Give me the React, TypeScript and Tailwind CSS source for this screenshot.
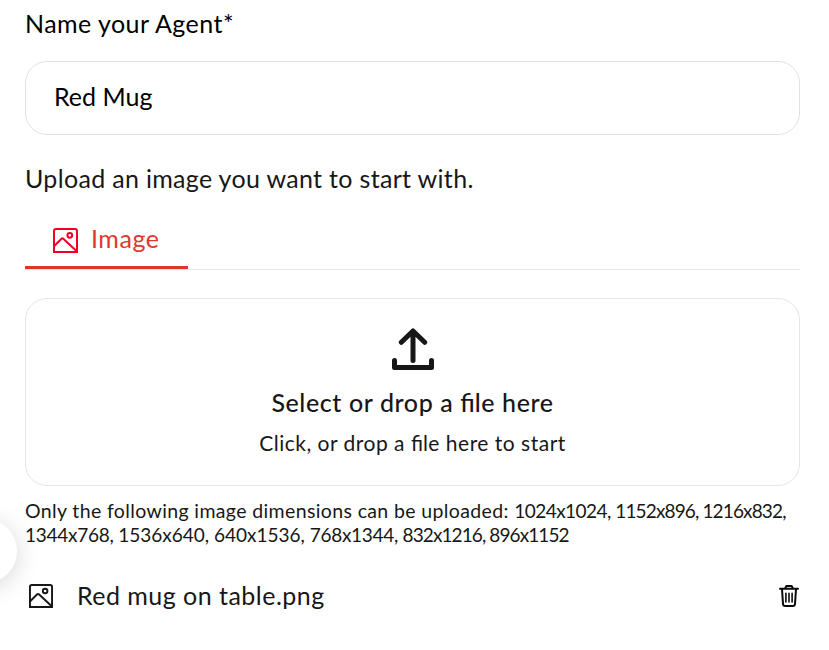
import React from "react";

function ImageIcon({ className }: { className: string }) {
  return (
    <svg className={className} viewBox="0 0 25 25" fill="none" stroke="currentColor" strokeWidth="2">
      <path d="M1 24V3A2 2 0 0 1 3 1h19A2 2 0 0 1 24 3V24H1Z" />
      <path d="M1 18.2 8.5 10.7Q9.4 9.9 10.3 10.7L24 23.5" />
      <circle cx="16.8" cy="7.3" r="2.4" />
    </svg>
  );
}

function UploadIcon() {
  return (
    <svg className="h-[42px] w-[42px]" viewBox="0 0 42 42" fill="none" stroke="#171717" strokeWidth="5" strokeLinecap="round" strokeLinejoin="round">
      <path d="M21 32.5V3M9.3 14.3 21 3l11.7 11.3" />
      <path d="M2.5 32.5v7h37v-7" />
    </svg>
  );
}

function TrashIcon() {
  return (
    <svg className="h-[22px] w-5" viewBox="0 0 20 22" fill="none" stroke="#0a0a0a" strokeWidth="2" strokeLinecap="round">
      <path d="M1 3.8h18M6.2 3.4 7 1.4Q7.3 1 7.7 1h4.6q.4 0 .7.4l.8 2" />
      <path d="M3 4l1 15q.2 2 2.2 2h7.6q2 0 2.2-2L17 4" />
      <path d="M6.9 8.3v8.7M10 8.3v8.7M13.1 8.3v8.7" strokeWidth="1.6" />
    </svg>
  );
}

const Fi = () => <span className="tracking-normal">fi</span>;

export default function App() {
  return (
    <main className="relative h-[650px] w-[829px] overflow-hidden bg-white pl-[25px] pr-[29px] font-['Lato','Noto_Sans',sans-serif] text-[25px] text-[#171717]">
      <div className="absolute -left-[47px] top-[519px] h-16 w-16 rounded-full bg-white shadow-[0_4px_24px_rgba(0,0,0,0.16)]" />
      <label htmlFor="agent-name" className="block h-[61px] pt-[7px] leading-8 tracking-[0.45px] text-black">Name your Agent*</label>
      <div className="flex h-[74px] items-center rounded-[22px] border border-[#e2e2e2] pb-1 pl-7 text-black">
        <input id="agent-name" defaultValue="Red Mug" className="w-full bg-transparent leading-8 outline-none" />
      </div>
      <p className="mt-[27px] leading-8 tracking-[0.32px]">Upload an image you want to start with.</p>
      <div className="mt-[17px] flex h-[59px] border-b border-[#e5e5e5]">
        <div className="flex h-[58px] w-[163px] items-center gap-[13px] border-b-[3px] border-[#e3342b] pl-7 text-[#e0392d]">
          <ImageIcon className="mt-[3px] h-[25px] w-[25px] text-[#f00025]" />
          <span className="tracking-[0.55px]">Image</span>
        </div>
      </div>
      <section className="mt-7 flex h-[188px] flex-col items-center rounded-[22px] border border-[#e5e5e5] pt-[29px]">
        <UploadIcon />
        <strong className="mt-4 font-medium leading-8 tracking-[0.6px]">Select or drop a <Fi />le here</strong>
        <span className="mt-[11px] text-[21px] leading-7 tracking-[0.5px]">Click, or drop a <Fi />le here to start</span>
      </section>
      <p className="mt-[13px] whitespace-nowrap text-[19px] leading-6">
        <span className="text-[19.5px] tracking-[0.37px]">Only the following image dimensions can be uploaded: </span>
        <span className="tracking-[-0.52px]">1024x1024, </span>
        <span className="tracking-[-0.86px]">1152x896, 1216x832,</span>
        <br />
        <span className="tracking-[-0.26px]">1344x768, </span>
        <span>1536x640, 640x1536, </span>
        <span className="tracking-[-0.3px]">768x1344, </span>
        <span className="tracking-[-0.9px]">832x1216, 896x1152</span>
      </p>
      <div className="mt-8 flex h-8 items-center pl-1">
        <ImageIcon className="mt-px h-6 w-6" />
        <span className="ml-6 flex-1 leading-8 tracking-[0.47px]">Red mug on table.png</span>
        <div className="mr-px mt-0.5"><TrashIcon /></div>
      </div>
    </main>
  );
}
